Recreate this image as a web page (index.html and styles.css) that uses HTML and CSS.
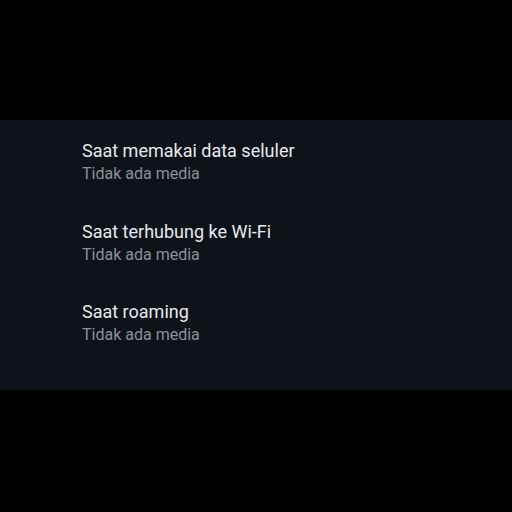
FILE: index.html
```html
<!DOCTYPE html>
<html lang="id">
<head>
<meta charset="utf-8">
<link rel="stylesheet" href="styles.css">
</head>
<body>
<div class="screen">
  <div class="top-space"></div>
  <section class="panel">
    <div class="item">
      <div class="title">Saat memakai data seluler</div>
      <div class="subtitle">Tidak ada media</div>
    </div>
    <div class="item">
      <div class="title">Saat terhubung ke Wi-Fi</div>
      <div class="subtitle">Tidak ada media</div>
    </div>
    <div class="item">
      <div class="title">Saat roaming</div>
      <div class="subtitle">Tidak ada media</div>
    </div>
  </section>
</div>
</body>
</html>
```
FILE: styles.css
```css
html, body {
  margin: 0;
  padding: 0;
  background: #000;
  width: 512px;
  height: 512px;
  overflow: hidden;
}
.screen {
  display: flex;
  flex-direction: column;
  font-family: Roboto, "Noto Sans", sans-serif;
}
.top-space {
  height: 120px;
}
.panel {
  height: 270px;
  box-sizing: border-box;
  background: #0e131a;
  padding: 20px 0 0 82px;
  display: flex;
  flex-direction: column;
  gap: 35.5px;
}
.item {
  display: flex;
  flex-direction: column;
}
.title {
  color: #e8e9eb;
  font-size: 18px;
  line-height: 22px;
}
.subtitle {
  color: #8c9096;
  font-size: 16px;
  line-height: 23px;
}
```
